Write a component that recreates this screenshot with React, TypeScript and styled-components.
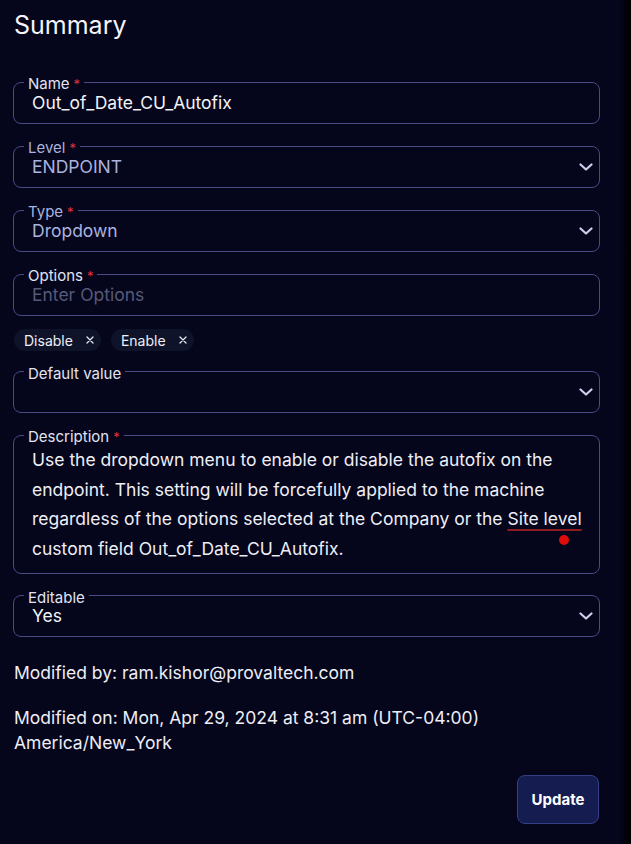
import React from 'react'
import styled, { createGlobalStyle } from 'styled-components'

const GlobalStyle = createGlobalStyle`
  html, body {
    margin: 0;
    padding: 0;
    background: #05051b;
  }
  body {
    font-family: Inter, "Noto Sans", "Liberation Sans", sans-serif;
    color: #eeeef6;
  }
`

const Page = styled.div`
  display: flex;
  min-height: 100vh;
  background: #05051b;
`

const Panel = styled.div`
  flex: 1;
  display: flex;
  flex-direction: column;
  gap: 13px;
  padding: 9px 20px 18px 13px;
`

const Edge = styled.div`
  width: 11px;
  background: linear-gradient(to right, #05051b, #000000);
`

const Title = styled.h1`
  margin: 0 0 19px 1px;
  font-size: 25px;
  line-height: 32px;
  font-weight: 400;
  color: #f4f4fa;
`

const Field = styled.fieldset<{ $pb?: number }>`
  position: relative;
  margin: 0;
  min-width: 0;
  border: 1px solid #484b84;
  border-radius: 8px;
  padding: 0 5px ${p => p.$pb ?? 8}px 10px;
`

const Legend = styled.legend<{ $muted?: boolean }>`
  padding: 4px 4px 0;
  font-size: 15px;
  line-height: 13px;
  color: ${p => (p.$muted ? '#a9b3df' : '#e2e3f2')};
`

const Star = styled.span`
  color: #e0303c;
  margin-left: 4px;
  font-size: 13px;
`

const ValueRow = styled.div`
  display: flex;
  align-items: center;
  height: 24px;
  padding-left: 8px;
`

const Value = styled.span<{ $tone?: 'normal' | 'muted' | 'placeholder' }>`
  flex: 1;
  font-size: 17.5px;
  line-height: 24px;
  white-space: nowrap;
  color: ${p =>
    p.$tone === 'muted' ? '#a9b3df' : p.$tone === 'placeholder' ? '#555a78' : '#f2f2f8'};
`

const Chevron = styled.svg`
  width: 14px;
  height: 8px;
  flex: none;
  margin-right: 1px;
`

const ChipRow = styled.div`
  display: flex;
  gap: 10px;
  margin: 0 0 -1px 1px;
`

const Chip = styled.div`
  display: flex;
  align-items: center;
  gap: 13px;
  height: 22px;
  padding: 0 7px 0 10px;
  border-radius: 11px;
  background: #0e1329;
  font-size: 14px;
  color: #eeeef6;
`

const ChipClose = styled.svg`
  width: 8px;
  height: 8px;
`

const TextBody = styled.div`
  position: relative;
  padding: 1px 0 0 8px;
  font-size: 17.5px;
  line-height: 29.5px;
  color: #eeeef6;
  white-space: nowrap;
`

const Misspelt = styled.span`
  text-decoration: underline;
  text-decoration-color: #8e1b1f;
  text-decoration-thickness: 2px;
  text-underline-offset: 4px;
`

const Marker = styled.span`
  position: absolute;
  right: 25px;
  top: 91px;
  width: 10px;
  height: 10px;
  border-radius: 50%;
  background: #e00b0b;
`

const Meta = styled.div`
  display: flex;
  flex-direction: column;
  gap: 20px;
  margin-top: 10px;
  padding-left: 1px;
`

const MetaText = styled.p`
  margin: 0;
  font-size: 17.5px;
  line-height: 25px;
  color: #eeeef6;
`

const Actions = styled.div`
  display: flex;
  justify-content: flex-end;
  margin-top: 7px;
`

const UpdateButton = styled.button`
  width: 82px;
  height: 49px;
  margin-right: 1px;
  border: 1px solid #343f88;
  border-radius: 8px;
  background: #151c50;
  color: #ffffff;
  font-family: Inter, "Liberation Sans", sans-serif;
  font-size: 15px;
  font-weight: 700;
`

const ChevronIcon = () => (
  <Chevron viewBox="0 0 14 8">
    <path d="M1.5 1.5 L7 6.5 L12.5 1.5" fill="none" stroke="#cdd0ec" strokeWidth="2.2" strokeLinecap="round" strokeLinejoin="round" />
  </Chevron>
)

const CloseIcon = () => (
  <ChipClose viewBox="0 0 8 8">
    <path d="M1 1 L7 7 M7 1 L1 7" stroke="#e6e7f2" strokeWidth="1.3" strokeLinecap="round" />
  </ChipClose>
)

type FieldProps = {
  label: string
  required?: boolean
  muted?: boolean
  pb?: number
  children: React.ReactNode
}

const OutlinedField = ({ label, required, muted, pb, children }: FieldProps) => (
  <Field $pb={pb}>
    <Legend $muted={muted}>
      {label}
      {required && <Star>*</Star>}
    </Legend>
    {children}
  </Field>
)

const chips = ['Disable', 'Enable']

export default function App() {
  return (
    <>
      <GlobalStyle />
      <Page>
        <Panel>
          <Title>Summary</Title>

          <OutlinedField label="Name" required>
            <ValueRow>
              <Value>Out_of_Date_CU_Autofix</Value>
            </ValueRow>
          </OutlinedField>

          <OutlinedField label="Level" required muted>
            <ValueRow>
              <Value $tone="muted">ENDPOINT</Value>
              <ChevronIcon />
            </ValueRow>
          </OutlinedField>

          <OutlinedField label="Type" required muted>
            <ValueRow>
              <Value $tone="muted">Dropdown</Value>
              <ChevronIcon />
            </ValueRow>
          </OutlinedField>

          <OutlinedField label="Options" required>
            <ValueRow>
              <Value $tone="placeholder">Enter Options</Value>
            </ValueRow>
          </OutlinedField>

          <ChipRow>
            {chips.map(c => (
              <Chip key={c}>
                {c}
                <CloseIcon />
              </Chip>
            ))}
          </ChipRow>

          <OutlinedField label="Default value">
            <ValueRow>
              <Value />
              <ChevronIcon />
            </ValueRow>
          </OutlinedField>

          <OutlinedField label="Description" required pb={10}>
            <TextBody>
              Use the dropdown menu to enable or disable the autofix on the
              <br />
              endpoint. This setting will be forcefully applied to the machine
              <br />
              regardless of the options selected at the Company or the <Misspelt>Site level</Misspelt>
              <br />
              custom field Out_of_Date_CU_Autofix.
              <Marker />
            </TextBody>
          </OutlinedField>

          <OutlinedField label="Editable">
            <ValueRow>
              <Value>Yes</Value>
              <ChevronIcon />
            </ValueRow>
          </OutlinedField>

          <Meta>
            <MetaText>Modified by: ram.kishor@provaltech.com</MetaText>
            <MetaText>
              Modified on: Mon, Apr 29, 2024 at 8:31 am (UTC-04:00)
              <br />
              America/New_York
            </MetaText>
          </Meta>

          <Actions>
            <UpdateButton>Update</UpdateButton>
          </Actions>
        </Panel>
        <Edge />
      </Page>
    </>
  )
}
